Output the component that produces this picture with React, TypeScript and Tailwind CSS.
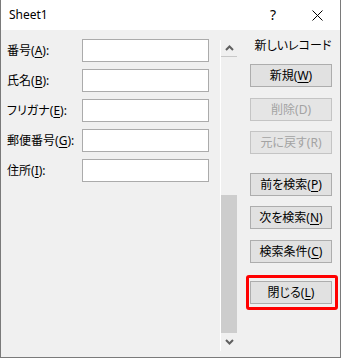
import React from "react";

const font = {
  fontFamily: '"Noto Sans", "Noto Sans CJK JP", sans-serif',
};

function K({ c }: { c: string }) {
  return <span className="underline underline-offset-[2px] decoration-[1px]">{c}</span>;
}

function Row({ label, k }: { label: string; k: string }) {
  return (
    <div className="flex items-center h-[23px]">
      <div className="w-[75px] text-[12px] leading-none text-black whitespace-nowrap">
        {label}(<K c={k} />):
      </div>
      <div className="w-[127px] h-[23px] bg-white border border-[#ababab]" />
    </div>
  );
}

function Btn({
  label,
  k,
  mt,
  disabled,
}: {
  label: string;
  k: string;
  mt: string;
  disabled?: boolean;
}) {
  return (
    <div
      className={
        "w-[82px] h-[23px] ml-[13px] flex items-center justify-center text-[12px] leading-none whitespace-nowrap border " +
        mt +
        (disabled
          ? " bg-[#e5e5e5] border-[#c4c4c4] text-[#a3a3a3]"
          : " bg-[#e1e1e1] border-[#adadad] text-black")
      }
    >
      {label}(
      {disabled ? k : <K c={k} />}
      )
    </div>
  );
}

export default function App() {
  return (
    <div
      className="relative w-[341px] h-[358px] bg-[#f0f0f0] border-x border-b border-[#7a7a7a] flex flex-col [font-feature-settings:'palt']"
      style={font}
    >
      <div className="h-[30px] bg-white flex items-center shrink-0">
        <span className="ml-[8px] text-[12px] text-black">Sheet1</span>
        <span className="ml-auto mr-[36px] text-[14px] text-black leading-none">?</span>
        <svg width="11" height="11" viewBox="0 0 11 11" className="mr-[17px]">
          <path d="M0.5 0.5 L10.5 10.5 M10.5 0.5 L0.5 10.5" stroke="#000" strokeWidth="1" fill="none" />
        </svg>
      </div>
      <div className="flex flex-1">
        <div className="w-[219px] flex flex-col pt-[9px] gap-[7px] pl-[6px]">
          <Row label="番号" k="A" />
          <Row label="氏名" k="B" />
          <Row label="フリガナ" k="E" />
          <Row label="郵便番号" k="G" />
          <Row label="住所" k="I" />
        </div>
        <div className="w-[17px] mt-[10px] h-[311px] border-l border-white flex flex-col">
          <div className="h-[16px] flex items-center justify-center">
            <svg width="9" height="6" viewBox="0 0 9 6">
              <path d="M1 5 L4.5 1.5 L8 5" stroke="#606060" strokeWidth="2" fill="none" />
            </svg>
          </div>
          <div className="h-[1px] bg-[#c8c8c8]" />
          <div className="h-[138px]" />
          <div className="h-[138px] bg-[#cdcdcd]" />
          <div className="h-[17px] flex items-center justify-center">
            <svg width="9" height="6" viewBox="0 0 9 6">
              <path d="M1 1 L4.5 4.5 L8 1" stroke="#606060" strokeWidth="2" fill="none" />
            </svg>
          </div>
        </div>
        <div className="flex-1 flex flex-col">
          <div className="mt-[8px] h-[16px] w-[82px] ml-[13px] pl-[4px] flex items-center justify-center text-[12px] leading-none text-black whitespace-nowrap">
            新しいレコード
          </div>
          <Btn label="新規" k="W" mt="mt-[10px]" />
          <Btn label="削除" k="D" mt="mt-[11px]" disabled />
          <Btn label="元に戻す" k="R" mt="mt-[10px]" disabled />
          <Btn label="前を検索" k="P" mt="mt-[19px]" />
          <Btn label="次を検索" k="N" mt="mt-[10px]" />
          <Btn label="検索条件" k="C" mt="mt-[11px]" />
          <Btn label="閉じる" k="L" mt="mt-[18px]" />
        </div>
      </div>
      <div className="absolute left-[245px] top-[275px] w-[92px] h-[35px] border-[3px] border-[#ff0000] rounded-[3px]" />
    </div>
  );
}
